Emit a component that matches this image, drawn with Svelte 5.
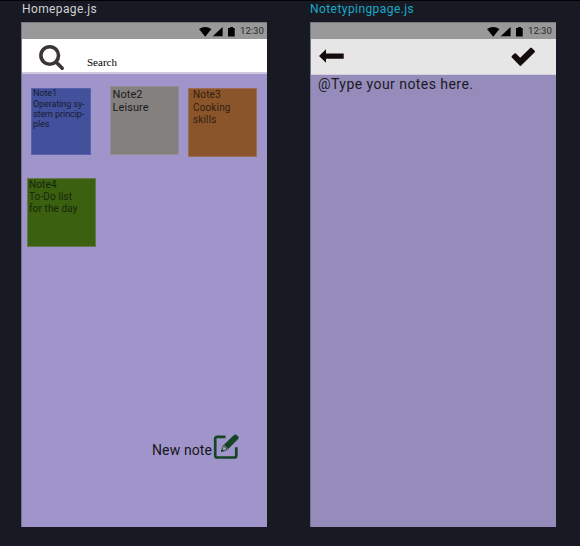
<script>
  const rows = [
    [
      { id: 'one', lines: ['Note1', 'Operating sy-', 'stem princip-', 'ples'] },
      { id: 'two', lines: ['Note2', 'Leisure'] },
      { id: 'three', lines: ['Note3', 'Cooking', 'skills'] }
    ],
    [{ id: 'four', lines: ['Note4', 'To-Do list', 'for the day'] }]
  ];
</script>

{#snippet statusBar()}
  <div class="status">
    <svg width="38" height="12" viewBox="0 0 38 12">
      <path d="M0 3Q6.2-.9 12.4 3L6.2 10.8Z" />
      <path d="M13.7 10.3L23.6 1V10.3Z" />
      <path d="M29 2H31V1H34V2H35.7V10.5H29Z" />
    </svg>
    <span>12:30</span>
  </div>
{/snippet}

<main>
  <section class="frame">
    <h2>Homepage.js</h2>
    <div class="phone home">
      {@render statusBar()}
      <div class="search">
        <svg width="28" height="28" viewBox="0 0 28 28">
          <circle cx="11.7" cy="11.5" r="8.8" />
          <path d="M18 18L24.2 24.2" />
        </svg>
        <span>Search</span>
      </div>
      <div class="notes">
        {#each rows as row}
          <div class="row">
            {#each row as note}
              <article class={note.id}>
                {#each note.lines as line}<p>{line}</p>{/each}
              </article>
            {/each}
          </div>
        {/each}
      </div>
      <div class="new">
        <span>New note</span>
        <svg width="26" height="26" viewBox="0 0 26 26">
          <path class="box" d="M12.5 2.9H4.2Q2.2 2.9 2.2 4.9V21.5Q2.2 23.5 4.2 23.5H21.3Q23.3 23.5 23.3 21.5V13.2" />
          <path class="pencil" d="M20.7 1.3Q22.2 -.2 23.9 1.2L25 2.3Q26.4 3.8 24.9 5.3L15.2 14.9L10.9 10.7Z" />
          <path class="tip" d="M10.4 11.4L14.5 15.4L8.5 17.4Z" />
          <path class="pencil" d="M8.8 14.9L11.4 17L7.9 18Z" />
        </svg>
      </div>
    </div>
  </section>

  <section class="frame editor">
    <h2>Notetypingpage.js</h2>
    <div class="phone typing">
      {@render statusBar()}
      <div class="toolbar">
        <svg class="back" width="26" height="16" viewBox="0 0 26 16">
          <path d="M0 8L7 1.2V5.5H24.7V10.8H7V14.8Z" />
        </svg>
        <svg class="check" width="25" height="20" viewBox="0 0 25 20">
          <path d="M.8 10.4Q.2 9.6.8 8.9L3.4 6.5Q4.2 5.8 5 6.5L9.2 10.7L19.2.9Q20 .2 20.8.9L23.7 3.7Q24.4 4.5 23.7 5.3L10.2 18.6Q9.4 19.3 8.6 18.6Z" />
        </svg>
      </div>
      <p class="body">@Type your notes here.</p>
    </div>
  </section>
</main>

<style>
  :global(body) { margin: 0; background: #171a22; }
  main {
    box-sizing: border-box;
    display: flex;
    gap: 43px;
    width: 580px;
    height: 546px;
    padding-left: 21px;
    overflow: hidden;
    border-top: 1px solid #020305;
    background: #171a22;
    font-family: Roboto, sans-serif;
  }
  svg { display: block; flex: none; }
  p { margin: 0; white-space: nowrap; }
  .frame { width: 246px; }
  h2 {
    box-sizing: border-box;
    height: 21px;
    margin: 0;
    padding: 1px 0 0 1px;
    font-size: 12px;
    font-weight: 400;
    line-height: 15px;
    letter-spacing: 0.38px;
    color: #d0d1d3;
    white-space: nowrap;
  }
  .editor h2 { padding-left: 0; letter-spacing: 0.43px; color: #1ba8c8; }
  .phone {
    box-sizing: border-box;
    width: 246px;
    height: 505px;
    border-left: 1px solid #77738a;
    overflow: hidden;
  }
  .home { background: #9f95ca; }
  .typing { background: #958cbc; }
  .status {
    box-sizing: border-box;
    display: flex;
    height: 17px;
    padding: 3px 0 0 177px;
    border-top: 1px solid #77777a;
    background: #999;
  }
  .typing .status { padding-left: 176px; }
  .status span {
    margin: -1px 0 0 3px;
    font-size: 9.6px;
    line-height: 11px;
    color: #292929;
  }
  .search {
    box-sizing: border-box;
    display: flex;
    height: 35px;
    padding: 5px 0 0 16px;
    border-bottom: 2px solid #cfcae0;
    background: #fff;
  }
  .search svg { fill: none; stroke: #3b3536; stroke-width: 3.6; stroke-linecap: round; }
  .search span {
    margin: 11px 0 0 21px;
    font: 11px/14px "Liberation Serif", serif;
    color: #000;
  }
  .notes { height: 335px; padding-top: 12px; box-sizing: border-box; }
  .row { display: flex; align-items: flex-start; height: 92px; }
  article {
    box-sizing: border-box;
    width: 69px;
    height: 69px;
    border: 1px solid;
    color: #1b1b1d;
  }
  .one {
    width: 60px;
    height: 67px;
    margin: 2px 0 0 9px;
    padding-left: 1px;
    border-color: #5861ac;
    background: #43519c;
    font-size: 9px;
    line-height: 10.3px;
    letter-spacing: -0.08px;
    color: #171c32;
  }
  .one p:first-child { margin-bottom: 0.5px; line-height: 9px; }
  .two {
    margin-left: 19px;
    padding: 1px 0 0 1.6px;
    border-color: #918d98;
    background: #84807e;
    font-size: 11px;
    line-height: 13px;
    letter-spacing: 0.05px;
  }
  .three {
    margin: 2px 0 0 9px;
    padding-left: 4px;
    border-color: #9d6c56;
    background: #8a552a;
    font-size: 10px;
    line-height: 12.5px;
    letter-spacing: 0.15px;
    color: #32200f;
  }
  .four {
    margin-left: 5px;
    padding-left: 1px;
    border-color: #63774d;
    background: #3a6010;
    font-size: 10px;
    line-height: 12.2px;
    letter-spacing: 0.12px;
    color: #172609;
  }
  .new {
    display: flex;
    align-items: flex-start;
    margin-left: 130px;
    padding-top: 25px;
    font-size: 14px;
    line-height: 18px;
    letter-spacing: 0.12px;
    color: #181620;
  }
  .new span { width: 61px; margin-top: 7px; white-space: nowrap; }
  .box { fill: none; stroke: #174425; stroke-width: 2.7; }
  .pencil { fill: #174425; }
  .tip { fill: #a6a0b8; stroke: #174425; stroke-width: 0.9; }
  .toolbar {
    box-sizing: border-box;
    display: flex;
    height: 36px;
    padding: 8px 0 0 8px;
    border-bottom: 1px solid #d3d1da;
    background: #e6e6e6;
  }
  .toolbar path { fill: #160b0b; }
  .back { margin-top: 1px; }
  .check { margin-left: 166px; }
  .body {
    padding-left: 7px;
    font-size: 14px;
    line-height: 18px;
    letter-spacing: 0.45px;
    color: #1c1a22;
  }
</style>
